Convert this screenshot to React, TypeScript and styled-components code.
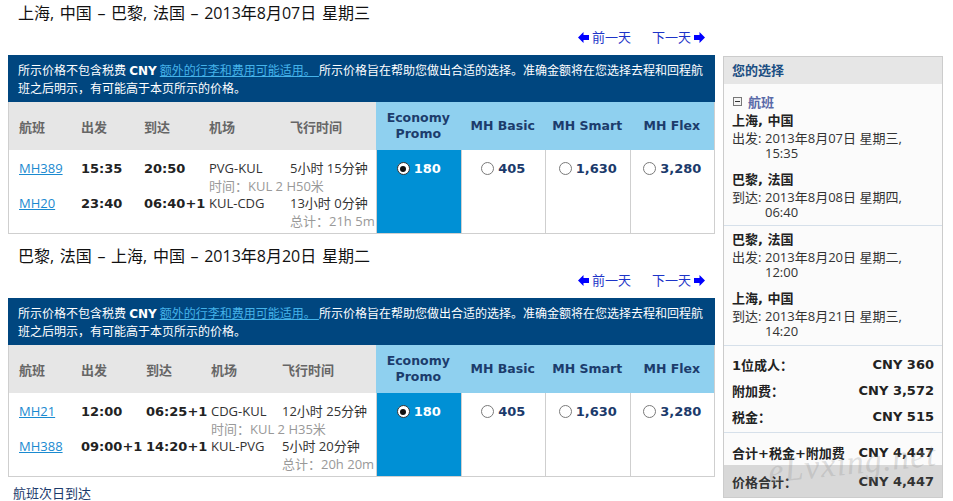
import React from "react";
import styled, { createGlobalStyle } from "styled-components";

const REG = `"Open Sans", "Noto Sans CJK SC", sans-serif`;
const BOLD = `"DejaVu Sans", "Noto Sans CJK SC", sans-serif`;

const Global = createGlobalStyle`
  html, body { margin: 0; padding: 0; background: #fff; }
  body { font-family: ${REG}; font-size: 13px; color: #333; }
`;

const Page = styled.div`
  position: relative;
  display: flex;
  align-items: flex-start;
  gap: 8px;
  padding-left: 8px;
  width: 953px;
  height: 501px;
  box-sizing: border-box;
  overflow: hidden;
`;

const Main = styled.div`
  width: 707px;
  flex: none;
  display: flex;
  flex-direction: column;
`;

const Title = styled.h2<{ $top: number }>`
  margin: ${(p) => p.$top}px 0 0;
  padding-left: 10px;
  font: 400 16px/22px ${REG};
  word-spacing: 1.5px;
  color: #111;
`;

const Nav = styled.div`
  display: flex;
  justify-content: flex-end;
  gap: 21px;
  padding-right: 10px;
  margin-top: 4px;
  height: 18px;
  margin-bottom: 9px;
`;

const NavLink = styled.a`
  display: flex;
  align-items: center;
  gap: 3px;
  font: 400 13px/18px ${REG};
  color: #1d34c8;
  text-decoration: none;
  cursor: pointer;
`;

const Arrow = ({ dir }: { dir: "l" | "r" }) => (
  <svg width="11" height="11" viewBox="0 0 11 11" style={{ transform: dir === "r" ? "scaleX(-1)" : undefined }}>
    <polygon points="0,5.5 5.5,0 5.5,3 11,3 11,8 5.5,8 5.5,11" fill="#0000ff" />
  </svg>
);

const Notice = styled.div`
  background: #00467f;
  color: #fff;
  padding: 7px 10px 5px;
  font: 400 12px/17px ${REG};
`;

const Cny = styled.b`
  font-weight: 700;
  font-family: ${BOLD};
`;

const NoticeLink = styled.a`
  color: #45b3ea;
  text-decoration: underline;
`;

const Grid = styled.div`
  display: grid;
  grid-template-columns: 367px repeat(4, 1fr);
  border: 1px solid #cfcfcf;
  border-top: none;
`;

const InfoHead = styled.div<{ $cols: string }>`
  display: grid;
  grid-template-columns: ${(p) => p.$cols};
  align-items: center;
  height: 48px;
  padding-left: 10px;
  background: #e6e6e6;
  font-weight: 700;
  font-size: 13px;
  font-family: ${BOLD};
  color: #666;
`;

const FareHead = styled.div`
  height: 48px;
  display: flex;
  align-items: center;
  justify-content: center;
  text-align: center;
  background: #8fd0ef;
  font: 700 12.5px/16px ${BOLD};
  color: #1c3c6c;
`;

const Info = styled.div<{ $cols: string }>`
  display: grid;
  grid-template-columns: ${(p) => p.$cols};
  grid-auto-rows: 17.5px;
  align-items: center;
  padding: 10px 0 3px 10px;
  font: 400 13px/17.5px ${REG};
  color: #333;
  white-space: nowrap;
`;

const FlightNo = styled.a`
  color: #1a8ad0;
  text-decoration: underline;
`;

const Time = styled.span`
  font-weight: 700;
  font-family: ${BOLD};
  color: #222;
`;

const Sub = styled.span<{ $col: string }>`
  grid-column: ${(p) => p.$col};
  color: #999;
`;

const FareCell = styled.div<{ $sel?: boolean }>`
  display: flex;
  justify-content: center;
  align-items: flex-start;
  padding-top: 10px;
  border-left: 1px solid #cfcfcf;
  background: ${(p) => (p.$sel ? "#0090d5" : "#fff")};
  color: ${(p) => (p.$sel ? "#fff" : "#1b3a6b")};
`;

const FareInner = styled.span`
  display: flex;
  align-items: center;
  gap: 4px;
  height: 17.5px;
  font-weight: 700;
  font-size: 13px;
  font-family: ${BOLD};
`;

const Radio = styled.span<{ $sel?: boolean }>`
  position: relative;
  width: 13px;
  height: 13px;
  box-sizing: border-box;
  border-radius: 50%;
  border: ${(p) => (p.$sel ? "1.5px solid #333" : "1px solid #7a7a7a")};
  background: #fff;
  &::after {
    content: "";
    display: ${(p) => (p.$sel ? "block" : "none")};
    position: absolute;
    left: 50%;
    top: 50%;
    width: 6px;
    height: 6px;
    margin: -3px 0 0 -3px;
    border-radius: 50%;
    background: #111;
  }
`;

const Footnote = styled.div`
  margin-top: 7px;
  padding-left: 5px;
  font: 400 13px/18px ${REG};
  color: #1b3a6b;
`;

/* Sidebar */
const Side = styled.aside`
  width: 220px;
  flex: none;
  margin-top: 56px;
  border: 1px solid #cccccc;
  box-sizing: border-box;
  background: #fbfbfb;
`;

const SideHead = styled.div`
  height: 27px;
  padding-left: 8px;
  background: #e6e6e6;
  font: 700 13px/27px ${BOLD};
  color: #1b4e82;
`;

const Section = styled.div<{ $pt: number; $pb: number; $line?: boolean }>`
  padding: ${(p) => p.$pt}px 8px ${(p) => p.$pb}px;
  border-bottom: ${(p) => (p.$line ? "1px solid #d6e0ea" : "none")};
`;

const Toggle = styled.div`
  display: flex;
  align-items: center;
  gap: 6px;
  height: 20px;
  padding-left: 1px;
  font-weight: 700;
  font-size: 13px;
  font-family: ${BOLD};
  color: #5a6aa8;
`;

const Box = styled.span`
  position: relative;
  width: 9px;
  height: 9px;
  box-sizing: border-box;
  border: 1px solid #777;
  background: #f4f4f4;
  &::after {
    content: "";
    position: absolute;
    left: 1px;
    right: 1px;
    top: 3px;
    height: 1px;
    background: #333;
  }
`;

const City = styled.div<{ $gap?: boolean }>`
  margin-top: ${(p) => (p.$gap ? 9 : 0)}px;
  font: 700 13px/20px ${BOLD};
  color: #222;
`;

const DateRow = styled.div`
  display: flex;
  font: 400 13px/15px ${REG};
  color: #333;
`;

const DateLabel = styled.span`
  width: 33px;
  flex: none;
`;

const PriceRow = styled.div`
  display: flex;
  justify-content: space-between;
  align-items: center;
  height: 26px;
  font-weight: 700;
  font-size: 13px;
  font-family: ${BOLD};
  color: #222;
`;

const Footer = styled.div`
  display: flex;
  justify-content: space-between;
  align-items: center;
  height: 32px;
  padding: 0 8px;
  background: #d8d8d8;
  font-weight: 700;
  font-size: 13px;
  font-family: ${BOLD};
  color: #333;
`;

const Watermark = styled.div`
  position: absolute;
  left: 768px;
  top: 446px;
  font: italic 400 34px/1 "Liberation Serif", serif;
  color: rgba(150, 150, 150, 0.3);
  letter-spacing: 1px;
  transform: rotate(-6deg);
  pointer-events: none;
`;

type Flight = {
  no: string;
  dep: string;
  arr: string;
  route: string;
  dur: string;
};

type Leg = {
  title: string;
  cols: string;
  flights: [Flight, Flight];
  stop: string;
  total: string;
};

const fares = [
  { name: ["Economy", "Promo"], price: "180", sel: true },
  { name: ["MH Basic"], price: "405" },
  { name: ["MH Smart"], price: "1,630" },
  { name: ["MH Flex"], price: "3,280" },
];

const legs: Leg[] = [
  {
    title: "上海, 中国 – 巴黎, 法国 – 2013年8月07日 星期三",
    cols: "62px 63px 65px 81px 1fr",
    flights: [
      { no: "MH389", dep: "15:35", arr: "20:50", route: "PVG-KUL", dur: "5小时 15分钟" },
      { no: "MH20", dep: "23:40", arr: "06:40+1", route: "KUL-CDG", dur: "13小时 0分钟" },
    ],
    stop: "时间：KUL 2 H50米",
    total: "总计：21h 5m",
  },
  {
    title: "巴黎, 法国 – 上海, 中国 – 2013年8月20日 星期二",
    cols: "62px 65px 65px 71px 1fr",
    flights: [
      { no: "MH21", dep: "12:00", arr: "06:25+1", route: "CDG-KUL", dur: "12小时 25分钟" },
      { no: "MH388", dep: "09:00+1", arr: "14:20+1", route: "KUL-PVG", dur: "5小时 20分钟" },
    ],
    stop: "时间：KUL 2 H35米",
    total: "总计：20h 20m",
  },
];

const FlightRow = ({ f }: { f: Flight }) => (
  <>
    <span>
      <FlightNo>{f.no}</FlightNo>
    </span>
    <Time>{f.dep}</Time>
    <Time>{f.arr}</Time>
    <span>{f.route}</span>
    <span>{f.dur}</span>
  </>
);

const LegBlock = ({ leg, top }: { leg: Leg; top: number }) => (
  <>
    <Title $top={top}>{leg.title}</Title>
    <Nav>
      <NavLink>
        <Arrow dir="l" />
        前一天
      </NavLink>
      <NavLink>
        下一天
        <Arrow dir="r" />
      </NavLink>
    </Nav>
    <Notice>
      所示价格不包含税费 <Cny>CNY</Cny> <NoticeLink>额外的行李和费用可能适用。 </NoticeLink>{" "}
      所示价格旨在帮助您做出合适的选择。准确金额将在您选择去程和回程航班之后明示，有可能高于本页所示的价格。
    </Notice>
    <Grid>
      <InfoHead $cols={leg.cols}>
        <span>航班</span>
        <span>出发</span>
        <span>到达</span>
        <span>机场</span>
        <span>飞行时间</span>
      </InfoHead>
      {fares.map((fa) => (
        <FareHead key={fa.price}>
          {fa.name.map((n, i) => (
            <React.Fragment key={n}>
              {i > 0 && <br />}
              {n}
            </React.Fragment>
          ))}
        </FareHead>
      ))}
      <Info $cols={leg.cols}>
        <FlightRow f={leg.flights[0]} />
        <Sub $col="4 / span 2">{leg.stop}</Sub>
        <FlightRow f={leg.flights[1]} />
        <Sub $col="5">{leg.total}</Sub>
      </Info>
      {fares.map((fa) => (
        <FareCell key={fa.price} $sel={fa.sel}>
          <FareInner>
            <Radio $sel={fa.sel} />
            {fa.price}
          </FareInner>
        </FareCell>
      ))}
    </Grid>
  </>
);

const CityBlock = ({
  city,
  label,
  date,
  time,
  gap,
}: {
  city: string;
  label: string;
  date: string;
  time: string;
  gap?: boolean;
}) => (
  <>
    <City $gap={gap}>{city}</City>
    <DateRow>
      <DateLabel>{label}</DateLabel>
      <span>
        {date}
        <br />
        {time}
      </span>
    </DateRow>
  </>
);

export default function App() {
  return (
    <>
      <Global />
      <Page>
        <Main>
          <LegBlock leg={legs[0]} top={2} />
          <LegBlock leg={legs[1]} top={11} />
          <Footnote>航班次日到达</Footnote>
        </Main>
        <Side>
          <SideHead>您的选择</SideHead>
          <Section $pt={7} $pb={5} $line>
            <Toggle>
              <Box />
              航班
            </Toggle>
            <CityBlock city="上海, 中国" label="出发:" date="2013年8月07日 星期三," time="15:35" />
            <CityBlock city="巴黎, 法国" label="到达:" date="2013年8月08日 星期四," time="06:40" gap />
          </Section>
          <Section $pt={4} $pb={6} $line>
            <CityBlock city="巴黎, 法国" label="出发:" date="2013年8月20日 星期二," time="12:00" />
            <CityBlock city="上海, 中国" label="到达:" date="2013年8月21日 星期三," time="14:20" gap />
          </Section>
          <Section $pt={5} $pb={3} $line>
            <PriceRow>
              <span>1位成人：</span>
              <span>CNY 360</span>
            </PriceRow>
            <PriceRow>
              <span>附加费：</span>
              <span>CNY 3,572</span>
            </PriceRow>
            <PriceRow>
              <span>税金：</span>
              <span>CNY 515</span>
            </PriceRow>
          </Section>
          <Section $pt={6} $pb={0}>
            <PriceRow>
              <span>合计+税金+附加费</span>
              <span>CNY 4,447</span>
            </PriceRow>
          </Section>
          <Footer>
            <span>价格合计：</span>
            <span>CNY 4,447</span>
          </Footer>
        </Side>
        <Watermark>eLvxing.net</Watermark>
      </Page>
    </>
  );
}
